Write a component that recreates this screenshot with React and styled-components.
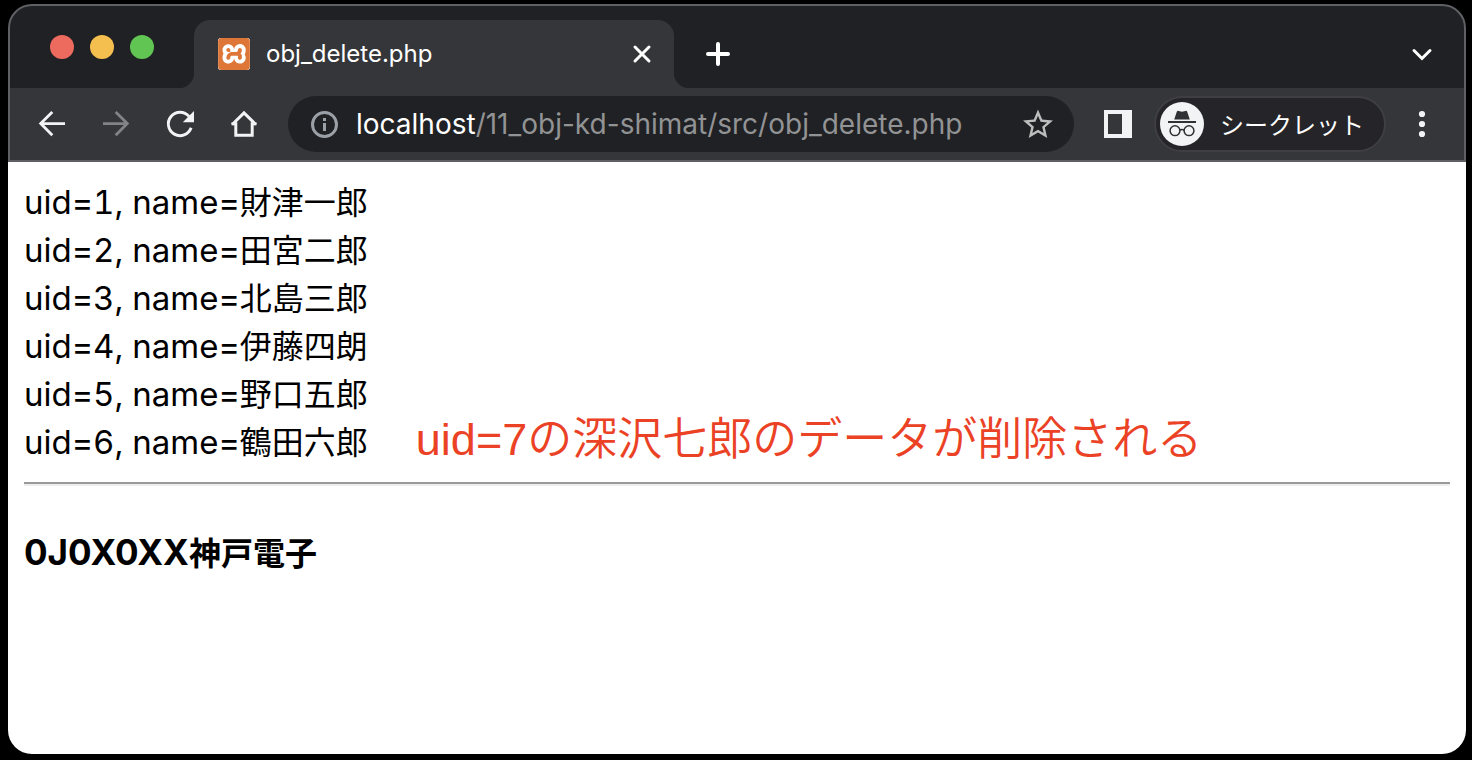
import React from 'react';
import styled, { createGlobalStyle } from 'styled-components';
import { SiXampp } from 'react-icons/si';

const GlobalStyle = createGlobalStyle`
  * { box-sizing: border-box; }
  body {
    margin: 0;
    background: #000;
    font-family: Inter, "Noto Sans CJK JP", sans-serif;
  }
`;

const Desktop = styled.div`
  display: flex;
  min-height: 100vh;
  padding: 4px 6px 6px 8px;
`;

const Window = styled.div`
  flex: 1;
  min-width: 0;
  display: flex;
  flex-direction: column;
`;

const Chrome = styled.header`
  background: #202124;
  border: 2px solid #5f6064;
  border-radius: 24px 24px 0 0;
  overflow: hidden;
`;

const TabStrip = styled.div`
  display: flex;
  align-items: center;
  height: 82px;
  padding: 14px 26px 0 40px;
`;

const Lights = styled.div`
  display: flex;
  gap: 16px;
  margin: 0 40px 14px 0;
`;

const Light = styled.button`
  width: 24px;
  height: 24px;
  padding: 0;
  border: 0;
  border-radius: 50%;
  background: ${(p) => p.$color};
`;

const Tab = styled.div`
  position: relative;
  display: flex;
  align-items: center;
  gap: 16px;
  flex: 0 1 480px;
  height: 68px;
  padding: 0 16px 0 24px;
  border-radius: 16px 16px 0 0;
  background: #35363a;

  &::before,
  &::after {
    content: "";
    position: absolute;
    bottom: 0;
    width: 16px;
    height: 16px;
  }
  &::before {
    right: 100%;
    background: radial-gradient(circle at 0 0, #202124 16px, #35363a 17px);
  }
  &::after {
    left: 100%;
    background: radial-gradient(circle at 100% 0, #202124 16px, #35363a 17px);
  }
`;

const Favicon = styled.span`
  display: flex;
  border-radius: 3px;
  overflow: hidden;
  background: #fff;
  color: #dd7637;
`;

const TabTitle = styled.span`
  flex: 1;
  color: #fff;
  font-size: 24px;
  line-height: 32px;
  white-space: nowrap;
`;

const IconButton = styled.button`
  display: flex;
  align-items: center;
  justify-content: center;
  flex: none;
  width: ${(p) => p.$size || 32}px;
  height: ${(p) => p.$size || 32}px;
  padding: 0;
  border: 0;
  background: none;
  color: ${(p) => p.$color || '#f1f3f4'};
`;

const NewTab = styled(IconButton)`
  margin: 0 auto 0 28px;
`;

const Toolbar = styled.div`
  display: flex;
  align-items: center;
  height: 72px;
  padding: 0 26px;
  background: #35363a;
`;

const NavButtons = styled.nav`
  display: flex;
  gap: 32px;
  margin-right: 28px;
`;

const AddressBar = styled.div`
  display: flex;
  align-items: center;
  flex: 1;
  min-width: 0;
  gap: 16px;
  height: 56px;
  margin-right: 28px;
  padding: 0 18px 0 20px;
  border-radius: 28px;
  background: #202124;
`;

const Url = styled.div`
  flex: 1;
  min-width: 0;
  overflow: hidden;
  color: #929395;
  font-size: 28px;
  line-height: 40px;
  white-space: nowrap;
  outline: 0;
`;

const Host = styled.span`
  color: #fff;
`;

const Incognito = styled.button`
  display: flex;
  align-items: center;
  gap: 16px;
  width: 232px;
  height: 56px;
  margin: 0 20px;
  padding: 0 4px;
  border: 2px solid #3e3e43;
  border-radius: 28px;
  background: #252429;
  color: #fff;
  font-family: "Noto Sans CJK JP", sans-serif;
  font-size: 24px;
  line-height: 32px;
  white-space: nowrap;
`;

const Page = styled.main`
  flex: 1;
  padding: 14px 16px 16px;
  border-radius: 0 0 24px 24px;
  background: #fff;
  color: #000;
  font-family: "Noto Sans CJK JP", sans-serif;
  font-size: 32px;
  line-height: 48px;
`;

const UserList = styled.ul`
  margin: 0;
  padding: 0;
  list-style: none;
`;

const UserRow = styled.li`
  display: flex;
  height: 48px;
  white-space: nowrap;
`;

const Latin = styled.span`
  font-family: Inter, sans-serif;
  font-size: 33px;
  font-variant-numeric: tabular-nums;
`;

const Note = styled.strong`
  margin-left: 48px;
  color: #eb4226;
  font-family: "Liberation Sans", "Noto Sans CJK JP", sans-serif;
  font-size: 45px;
  font-weight: 350;
  line-height: 48px;
`;

const Rule = styled.hr`
  height: 4px;
  margin: 18px 0 41px;
  border: 0;
  border-top: 2px solid #9a9a9a;
  border-bottom: 2px solid #eee;
`;

const Heading = styled.h4`
  margin: 0;
  font-size: 32px;
  font-weight: 700;
  line-height: 48px;
`;

const HeadingCode = styled.span`
  font-family: Inter, sans-serif;
  font-size: 35px;
`;

const Stroke = ({ d, w = 3, cap = 'butt' }) => (
  <svg width="32" height="32" viewBox="0 0 32 32" fill="none" stroke="currentColor" strokeWidth={w} strokeLinecap={cap} aria-hidden="true">
    <path d={d} />
  </svg>
);

const users = [
  [1, '財津一郎'],
  [2, '田宮二郎'],
  [3, '北島三郎'],
  [4, '伊藤四朗'],
  [5, '野口五郎'],
  [6, '鶴田六郎'],
];

export default function App() {
  return (
    <Desktop>
      <GlobalStyle />
      <Window>
        <Chrome>
          <TabStrip>
            <Lights>
              <Light $color="#ed6a5e" aria-label="Close window" />
              <Light $color="#f5bf4f" aria-label="Minimize" />
              <Light $color="#61c554" aria-label="Zoom window" />
            </Lights>
            <Tab>
              <Favicon><SiXampp size={32} aria-hidden="true" /></Favicon>
              <TabTitle>obj_delete.php</TabTitle>
              <IconButton aria-label="Close tab" $color="#fff">
                <Stroke d="M9 9L23 23M23 9L9 23" cap="round" />
              </IconButton>
            </Tab>
            <NewTab aria-label="New tab" $color="#fff">
              <Stroke d="M16 6V26M6 16H26" w={4} cap="round" />
            </NewTab>
            <IconButton aria-label="Search tabs" $color="#fff">
              <Stroke d="M8 12.5L16 20.5L24 12.5" cap="round" />
            </IconButton>
          </TabStrip>
          <Toolbar>
            <NavButtons aria-label="Navigation">
              <IconButton aria-label="Back"><Stroke d="M29 15.6H5M16.3 4L4.7 15.6L16.3 27.2" w={2.8} /></IconButton>
              <IconButton aria-label="Forward" $color="#828386"><Stroke d="M3 15.6H27M15.7 4L27.3 15.6L15.7 27.2" w={2.8} /></IconButton>
              <IconButton aria-label="Reload">
                <svg width="32" height="32" viewBox="0 0 32 32" aria-hidden="true">
                  <path d="M25 8.4A11.7 11.7 0 1 0 27.1 19.8" fill="none" stroke="currentColor" strokeWidth="2.9" />
                  <path d="M30 3V14.2H18.8Z" fill="currentColor" />
                </svg>
              </IconButton>
              <IconButton aria-label="Home"><Stroke d="M4 16.7L16 4.9L28 16.7M3.5 15.7H7.8V27.3H24.2V15.7H28.5" /></IconButton>
            </NavButtons>
            <AddressBar>
              <IconButton aria-label="Site information" $color="#9aa0a6">
                <svg width="32" height="32" viewBox="0 0 32 32" fill="none" stroke="currentColor" strokeWidth="3" aria-hidden="true">
                  <circle cx="16.5" cy="16.5" r="12" />
                  <path d="M16.5 10V13M16.5 15V23" />
                </svg>
              </IconButton>
              <Url role="textbox" aria-label="Address" contentEditable suppressContentEditableWarning spellCheck={false}>
                <Host>localhost</Host>/11_obj-kd-shimat/src/obj_delete.php
              </Url>
              <IconButton aria-label="Bookmark this page" $color="#bdbdbe" $size={36}>
                <svg width="36" height="36" viewBox="0 -0.4 24 24" fill="currentColor" aria-hidden="true">
                  <path d="M22 9.24l-7.19-.62L12 2 9.19 8.63 2 9.24l5.46 4.73L5.82 21 12 17.27 18.18 21l-1.63-7.03L22 9.24zM12 15.4l-3.76 2.27 1-4.28-3.32-2.88 4.38-.38L12 6.1l1.71 4.04 4.38.38-3.32 2.88 1 4.28L12 15.4z" />
                </svg>
              </IconButton>
            </AddressBar>
            <IconButton aria-label="Side panel">
              <svg width="32" height="32" viewBox="0 0 32 32" fill="currentColor" fillRule="evenodd" aria-hidden="true">
                <path d="M2 2H30V30H2ZM6 6V26H20V6Z" />
              </svg>
            </IconButton>
            <Incognito>
              <svg width="44" height="44" viewBox="0 0 44 44" aria-hidden="true">
                <circle cx="22" cy="22" r="22" fill="#f1f3f4" />
                <path d="M16.8 9.8Q17.3 8.5 18.6 8.9L22 9.8L25.4 8.9Q26.7 8.5 27.2 9.8L29.8 17.5H14.2Z" fill="#303134" />
                <path d="M8 20H36" stroke="#303134" strokeWidth="2" />
                <g fill="none" stroke="#303134" strokeWidth="1.5">
                  <circle cx="15" cy="28.7" r="4.9" />
                  <circle cx="29" cy="28.7" r="4.9" />
                  <path d="M19.8 28.4Q22 26.8 24.2 28.4" />
                </g>
              </svg>
              シークレット
            </Incognito>
            <IconButton aria-label="Menu">
              <svg width="32" height="32" viewBox="0 0 32 32" fill="currentColor" aria-hidden="true">
                <circle cx="16" cy="6" r="3.1" />
                <circle cx="16" cy="16" r="3.1" />
                <circle cx="16" cy="26" r="3.1" />
              </svg>
            </IconButton>
          </Toolbar>
        </Chrome>
        <Page>
          <UserList>
            {users.map(([uid, name]) => (
              <UserRow key={uid}>
                <span><Latin>{`uid=${uid}, name=`}</Latin>{name}</span>
                {uid === 6 && <Note>uid=7の深沢七郎のデータが削除される</Note>}
              </UserRow>
            ))}
          </UserList>
          <Rule />
          <Heading>
            <HeadingCode>0J0X0XX</HeadingCode>神戸電子
          </Heading>
        </Page>
      </Window>
    </Desktop>
  );
}
